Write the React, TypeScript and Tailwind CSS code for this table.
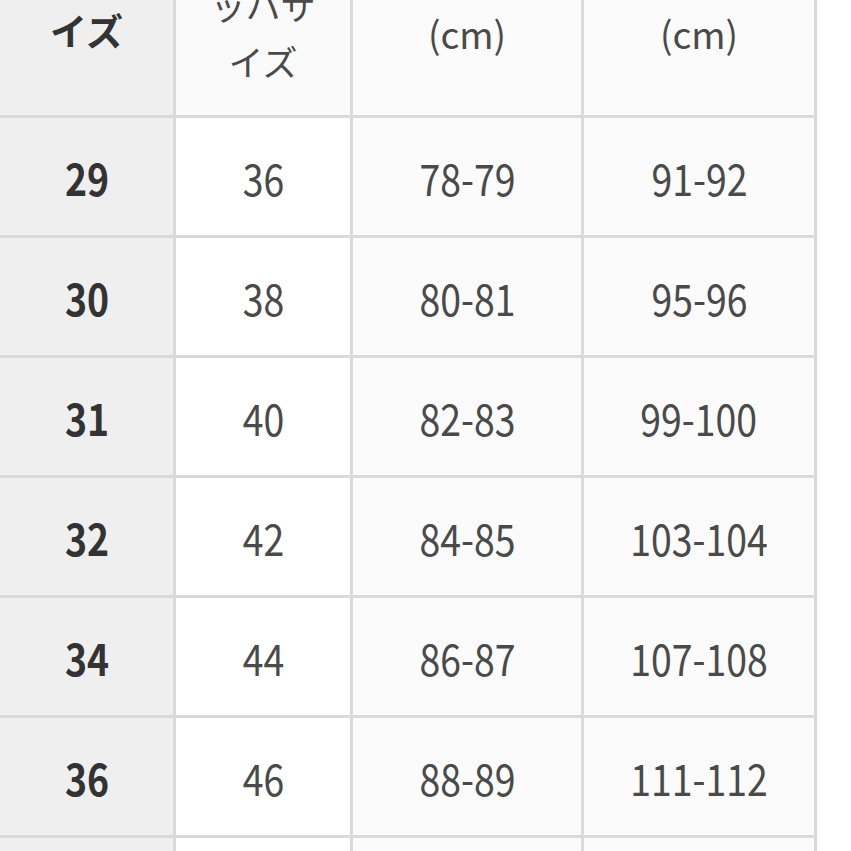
import React from "react";

const rows = [
  ["29", "36", "78-79", "91-92"],
  ["30", "38", "80-81", "95-96"],
  ["31", "40", "82-83", "99-100"],
  ["32", "42", "84-85", "103-104"],
  ["34", "44", "86-87", "107-108"],
  ["36", "46", "88-89", "111-112"],
  ["", "", "", ""],
];

const font = { fontFamily: '"Noto Sans CJK JP", "Noto Sans", sans-serif' };

const Txt = ({ children, bold }: { children: React.ReactNode; bold?: boolean }) => (
  <span
    className={`inline-block scale-x-[0.85] text-[44px] leading-none ${
      bold ? "font-semibold text-[#333]" : "font-normal text-[#4a4a4a]"
    }`}
  >
    {children}
  </span>
);

export default function App() {
  return (
    <div className="h-[851px] w-[851px] overflow-hidden bg-white" style={font}>
      <div className="grid w-[817px] grid-cols-[173px_174px_228px_230px] gap-[3px] bg-[#dadada] pr-[3px]">
        {/* header */}
        <div className="flex h-[115px] justify-center bg-[#efefef] pt-[8px]">
          <span className="text-[37px] font-bold leading-[44px] text-[#333]">イズ</span>
        </div>
        <div className="flex h-[115px] flex-col items-center overflow-hidden bg-[#fafafa]">
          <span className="-mt-[23px] text-[35px] leading-[56px] text-[#4a4a4a]">ッハサ</span>
          <span className="text-[35px] leading-[56px] text-[#4a4a4a]">イズ</span>
        </div>
        <div className="flex h-[115px] justify-center bg-[#fbfbfb] pt-[10px]">
          <span className="text-[37px] leading-[46px] text-[#4a4a4a]">(cm)</span>
        </div>
        <div className="flex h-[115px] justify-center bg-[#fbfbfb] pt-[10px]">
          <span className="text-[37px] leading-[46px] text-[#4a4a4a]">(cm)</span>
        </div>

        {rows.map((r, i) => (
          <React.Fragment key={i}>
            <div className="flex h-[117px] items-center justify-center bg-[#efefef]">
              <Txt bold>{r[0]}</Txt>
            </div>
            {r.slice(1).map((c, j) => (
              <div
                key={j}
                className={`flex h-[117px] items-center justify-center ${
                  j === 0 ? "bg-white" : "bg-[#fbfbfb]"
                }`}
              >
                <Txt>{c}</Txt>
              </div>
            ))}
          </React.Fragment>
        ))}
      </div>
    </div>
  );
}
